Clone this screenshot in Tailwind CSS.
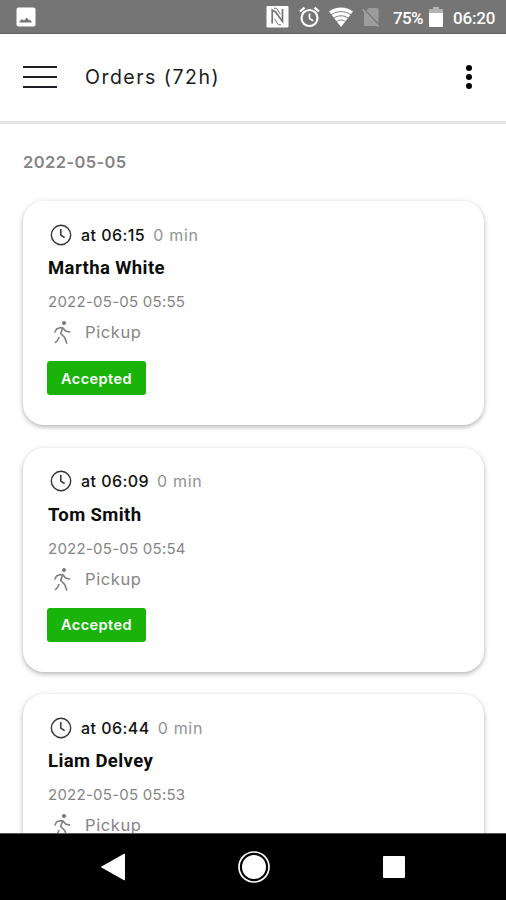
<!DOCTYPE html>
<html lang="en">

<head>
  <meta charset="UTF-8">
  <meta name="viewport" content="width=device-width, initial-scale=1.0">
  <script src="https://cdn.jsdelivr.net/npm/@tailwindcss/browser@4"></script>
  <title>Orders</title>
</head>

<body class="h-[900px] w-[506px] flex flex-col overflow-hidden bg-white font-[Inter,sans-serif]">

  <!-- status bar -->
  <div class="h-[34px] shrink-0 flex items-center bg-[#757575] border-b border-[#626262] pl-4 pr-[10px] text-white font-[Roboto,sans-serif]">
    <svg class="mt-px size-[20px]" viewBox="0 0 20 20">
      <rect x="0.5" y="0.5" width="19" height="19" rx="2" fill="#fff" />
      <path d="M3.5 15.5v-1l2.500-2.500 2 1.500 3-3 2 3 1-1 2 3z" fill="#757575" />
    </svg>
    <div class="ml-auto flex items-center">
      <!-- nfc -->
      <svg class="w-[23px] h-[23px]" viewBox="0 0 23 23" fill="none">
        <rect x="0.500" y="1" width="22" height="21.500" rx="1" fill="#fff" />
        <path d="M6.200 18.500V5l3.300 2 7 9.500V4" stroke="#757575" stroke-width="1.700" />
        <path d="M8 3.300h2.500l4 6M15 19.800h-2.500l-4-6" stroke="#757575" stroke-width="1" />
      </svg>
      <!-- alarm -->
      <svg class="ml-[10px] w-[21px] h-[22px]" viewBox="0 0 21 22" fill="none" stroke="#fff">
        <circle cx="10.500" cy="12" r="8" stroke-width="2.200" />
        <path d="M10.500 7.500v5l3.700 2.200" stroke-width="1.700" />
        <path d="M1 5.500L5.500 1.700M20 5.500L15.500 1.700" stroke-width="2.200" />
      </svg>
      <!-- wifi -->
      <svg class="ml-[9px] w-[24px] h-[20px]" viewBox="0 0 24 20">
        <path d="M12 20L0 4.500C3.500 1.800 7.500.5 12 .5s8.500 1.300 12 4z" fill="#fff" />
        <path d="M2 7.800c6-4.200 14-4.200 20 0M4.500 11.200c4.500-3.200 10.500-3.200 15 0M7.200 14.600c3-2 6.600-2 9.600 0" fill="none" stroke="#757575" stroke-width="0.900" />
      </svg>
      <!-- no sim -->
      <svg class="ml-[9px] w-[18px] h-[20px]" viewBox="0 0 18 20">
        <path d="M7 1h8a1.500 1.500 0 0 1 1.500 1.500V19H2V6z" fill="#9c9c9c" />
        <path d="M.5 1.500L17.500 19" stroke="#757575" stroke-width="2.400" />
        <path d="M.5 2.500L16.500 19.500" stroke="#a5a5a5" stroke-width="1.500" />
      </svg>
      <span class="ml-[13px] w-[32px] text-[17px] font-medium tracking-[-0.6px] leading-[20px] pt-[2px]">75%</span>
      <!-- battery -->
      <svg class="ml-[4px] mt-px w-[14px] h-[20px]" viewBox="0 0 14 20">
        <path d="M4 0h6v2h3a1 1 0 0 1 1 1v3H0V3a1 1 0 0 1 1-1h3z" fill="#b4b4b4" />
        <path d="M0 6h14v13a1 1 0 0 1-1 1H1a1 1 0 0 1-1-1z" fill="#fff" />
      </svg>
      <span class="ml-[10px] w-[43px] text-[17px] font-medium tracking-[-0.2px] leading-[20px] pt-[2px] whitespace-nowrap">06:20</span>
    </div>
  </div>

  <!-- header -->
  <header class="h-[90px] shrink-0 flex items-center pl-[23px] pr-[34px] pb-[1px] bg-white border-b-3 border-[#e4e4e4]">
    <div class="flex flex-col gap-[8px]">
      <span class="block w-[34px] h-[2px] bg-[#1d1d28]"></span>
      <span class="block w-[34px] h-[2px] bg-[#1d1d28]"></span>
      <span class="block w-[34px] h-[2px] bg-[#1d1d28]"></span>
    </div>
    <h1 class="ml-[28px] pt-[2px] text-[19.5px] tracking-[1.5px] text-[#1c1c1c]">Orders (72h)</h1>
    <div class="ml-auto flex flex-col gap-[3px]">
      <span class="block size-[6px] rounded-full bg-black"></span>
      <span class="block size-[6px] rounded-full bg-black"></span>
      <span class="block size-[6px] rounded-full bg-black"></span>
    </div>
  </header>

  <main class="flex-1 min-h-0 overflow-hidden px-[23px] pt-[28px]">
    <h2 class="h-[20px] leading-[20px] text-[16.5px] font-semibold tracking-[0.4px] text-[#858585]">2022-05-05</h2>
    <div id="orders" class="mt-[29px] mr-[-1px] flex flex-col gap-[22.500px]"></div>
  </main>

  <!-- navigation bar -->
  <nav class="h-[67px] shrink-0 bg-black border-t border-[#555] flex items-center justify-between pl-[100px] pr-[101px]">
    <svg class="w-[26px] h-[28px]" viewBox="0 0 26 28">
      <path d="M1.500 14L24.500 1v26z" fill="#fff" stroke="#fff" stroke-linejoin="round" />
    </svg>
    <svg class="mr-[2px] size-[32px]" viewBox="0 0 32 32">
      <circle cx="16" cy="16" r="15" fill="none" stroke="#fff" stroke-width="1.700" />
      <circle cx="16" cy="16" r="12" fill="#fff" />
    </svg>
    <span class="block size-[22px] rounded-[1px] bg-white"></span>
  </nav>

  <script>
    const orders = [
      { at: '06:15', name: 'Martha White', date: '2022-05-05 05:55' },
      { at: '06:09', name: 'Tom Smith', date: '2022-05-05 05:54' },
      { at: '06:44', name: 'Liam Delvey', date: '2022-05-05 05:53' },
    ];

    document.getElementById('orders').innerHTML = orders.map(order => `
      <div class="h-[224px] shrink-0 rounded-[21px] bg-white pl-[25px] pt-[19px] shadow-[0_2px_4px_rgba(0,0,0,0.24),0_1px_8px_rgba(0,0,0,0.08)]">
        <div class="h-[29px] flex items-center whitespace-nowrap">
          <svg class="ml-[2px] size-[22px]" viewBox="0 0 22 22" fill="none" stroke="#333">
            <circle cx="11" cy="11" r="9.700" stroke-width="1.400" />
            <path d="M10.800 5v6.200l3.800 2.500" stroke-width="1.500" />
          </svg>
          <span class="ml-[9px] text-[16px] font-medium tracking-[0.45px] text-[#111]">at ${order.at}</span>
          <span class="ml-[8px] text-[16px] tracking-[0.7px] text-[#929292]">0 min</span>
        </div>
        <h3 class="h-[39px] leading-[39px] text-[18.5px] font-bold tracking-[0.4px] font-[Roboto,sans-serif] text-[#0c0c0c]">${order.name}</h3>
        <p class="h-[26px] pt-px leading-[26px] text-[15px] tracking-[0.25px] text-[#858585]">${order.date}</p>
        <div class="h-[37px] flex items-center">
          <svg class="ml-[5px] w-[18px] h-[25px]" viewBox="0 0 18 25" fill="none" stroke="#7d7d7d" stroke-width="1.600" stroke-linecap="round" stroke-linejoin="round">
            <circle cx="11" cy="3" r="1.600" fill="#7d7d7d" stroke-width="1" />
            <path d="M2 12L3.500 9 7.500 7.500 10 8l2.500 3 4 1M9.500 8.200L7.700 13.500l4 4 2 5.500M6 17.500L4.500 20.500 2.500 22.500" />
          </svg>
          <span class="ml-[14px] text-[16.5px] tracking-[0.6px] text-[#858585]">Pickup</span>
        </div>
        <span class="mt-[10px] ml-[-1px] flex w-[99px] h-[34px] items-center justify-center rounded-[3px] bg-[#19b30a] pt-px text-[14.500px] font-semibold tracking-[0.45px] text-white">Accepted</span>
      </div>
    `).join('');
  </script>
</body>

</html>
